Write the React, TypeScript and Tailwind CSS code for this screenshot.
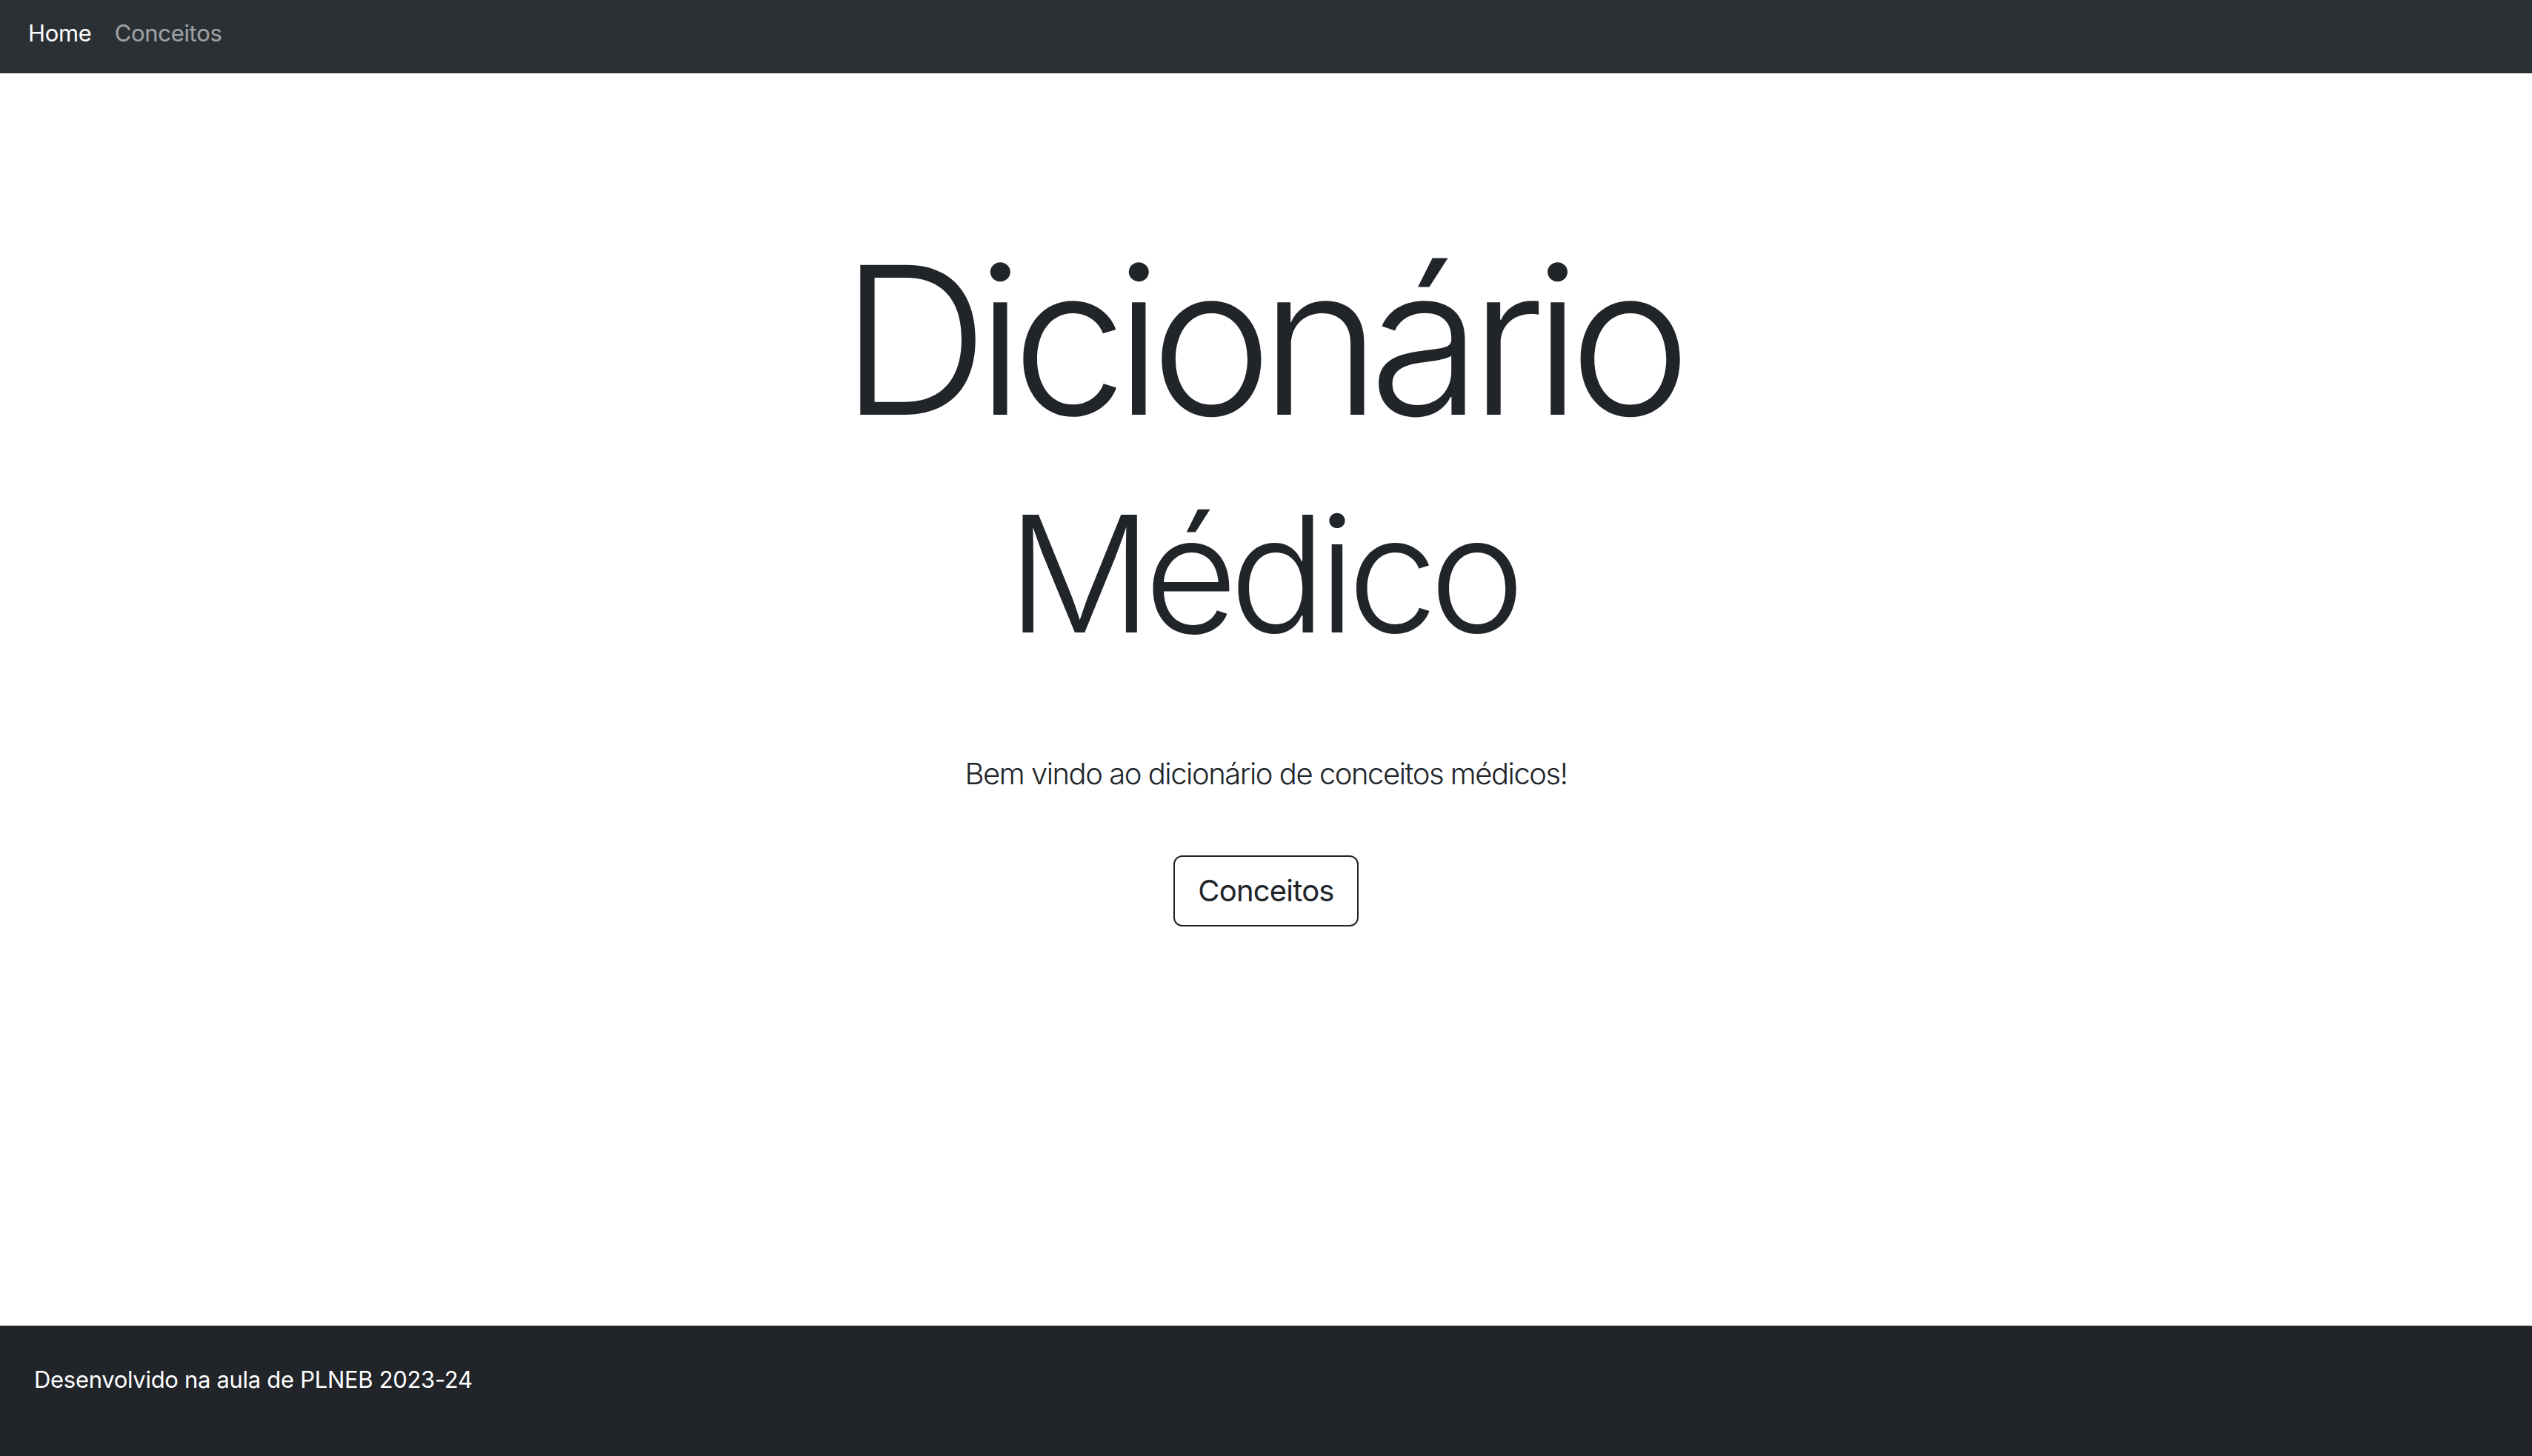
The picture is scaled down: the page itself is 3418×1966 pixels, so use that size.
import React from 'react';

const NavBar: React.FC = () => (
  <nav className="h-[99px] bg-[#2b3035] flex items-center px-[38px] pb-[8px] gap-[31px] text-[31px] tracking-[-0.01em]">
    <a className="text-white">Home</a>
    <a className="text-white/55">Conceitos</a>
  </nav>
);

const Footer: React.FC = () => (
  <footer className="h-[176px] bg-[#212529] flex items-center px-[46px] pb-[30px]">
    <p className="text-white text-[31px] tracking-[-0.01em]">Desenvolvido na aula de PLNEB 2023-24</p>
  </footer>
);

const App: React.FC = () => {
  return (
    <div className="min-h-screen flex flex-col bg-white text-[#212529] font-['Inter',sans-serif]">
      <NavBar />

      {/* Hero */}
      <main className="flex-1 flex flex-col items-center pt-[221px]">
        <h1 className="pr-[17px] text-[278px] leading-none font-light tracking-[-0.06em]">Dicionário</h1>
        <h2 className="mt-[68px] pr-[11px] text-[218px] leading-none font-light tracking-[-0.052em]">Médico</h2>
        <p className="mt-[141px] text-[40px] leading-none font-light tracking-[-0.037em]">
          Bem vindo ao dicionário de conceitos médicos!
        </p>
        <button className="mt-[90px] h-[96px] px-[31px] border-2 border-[#212529] rounded-[12px] text-[40px] tracking-[-0.02em] text-[#212529] bg-white">
          Conceitos
        </button>
      </main>

      <Footer />
    </div>
  );
};

export default App;
